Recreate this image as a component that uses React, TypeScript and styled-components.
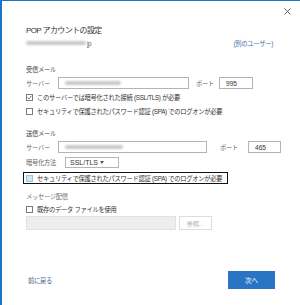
import React from 'react';
import styled, { createGlobalStyle } from 'styled-components';

const GlobalStyle = createGlobalStyle`
	html, body {
		margin: 0;
		padding: 0;
		background: #ffffff;
	}
	body {
		font-family: "Liberation Sans", "Noto Sans CJK JP", sans-serif;
		color: #333333;
	}
`;

const Dialog = styled.div`
	position: relative;
	box-sizing: border-box;
	width: 300px;
	height: 305px;
	background: #ffffff;
	border-left: 2px solid #1b74c9;
	border-top: 1px solid #1b74c9;
	display: flex;
	flex-direction: column;
	padding: 0 25px 16px 24px;
	letter-spacing: -0.3px;
`;

const Close = styled.button`
	position: absolute;
	top: 4px;
	right: 7px;
	width: 12px;
	height: 12px;
	padding: 0;
	border: 0;
	background: none;
	display: flex;
	align-items: center;
	justify-content: center;
`;

const Title = styled.div`
	margin-top: 24px;
	height: 12px;
	line-height: 12px;
	font-size: 8px;
	letter-spacing: -0.6px;
	color: #333333;
	white-space: nowrap;
`;

const AccountRow = styled.div`
	margin-top: 1px;
	height: 10px;
	display: flex;
	align-items: center;
	justify-content: space-between;
	padding-right: 2px;
	font-size: 6.3px;
`;

const Blur = styled.span<{ $w: number }>`
	display: inline-block;
	width: ${p => p.$w}px;
	height: 4px;
	border-radius: 2px;
	background: #c8c8c8;
	filter: blur(1.2px);
	vertical-align: middle;
`;

const Account = styled.span`
	color: #666666;
	display: flex;
	align-items: center;
	gap: 1px;
`;

const Link = styled.span`
	color: #3c6fae;
	white-space: nowrap;
`;

const Heading = styled.div<{ $gap: number; $muted?: boolean }>`
	margin-top: ${p => p.$gap}px;
	height: 10px;
	line-height: 10px;
	font-size: 6.3px;
	color: ${p => (p.$muted ? '#707070' : '#444444')};
	white-space: nowrap;
`;

const ServerRow = styled.div<{ $gap: number }>`
	margin-top: ${p => p.$gap}px;
	height: 12px;
	display: flex;
	align-items: center;
	font-size: 6.3px;
`;

const Label = styled.span<{ $w?: number }>`
	color: #666666;
	white-space: nowrap;
	width: ${p => (p.$w ? `${p.$w}px` : 'auto')};
	flex-shrink: 0;
`;

const TextBox = styled.div<{ $w: number; $ml?: number }>`
	box-sizing: border-box;
	width: ${p => p.$w}px;
	height: 12px;
	margin-left: ${p => p.$ml ?? 0}px;
	border: 1px solid #b4b4b4;
	background: #ffffff;
	display: flex;
	align-items: center;
	padding-left: 6px;
	font-size: 6.6px;
	letter-spacing: 0;
	color: #333333;
	flex-shrink: 0;
`;

const CheckRow = styled.div<{ $gap: number; $focus?: boolean }>`
	margin-top: ${p => p.$gap}px;
	height: 10px;
	display: flex;
	align-items: center;
	gap: 4px;
	font-size: 6.3px;
	color: #333333;
	white-space: nowrap;
	box-sizing: border-box;
	${p =>
		p.$focus
			? `margin-left: -2px; width: 203px; padding-left: 2px; outline: 1px solid #111111;`
			: ''}
`;

const Box = styled.span<{ $focus?: boolean }>`
	box-sizing: border-box;
	width: 7px;
	height: 7px;
	border: 1px solid ${p => (p.$focus ? '#9cc4e4' : '#7a7a7a')};
	background: ${p => (p.$focus ? '#cfe6f7' : '#ffffff')};
	display: flex;
	align-items: center;
	justify-content: center;
	flex-shrink: 0;
`;

const SelectRow = styled.div`
	margin-top: 4px;
	height: 11px;
	display: flex;
	align-items: center;
	gap: 9px;
	font-size: 6.3px;
`;

const Select = styled.div`
	box-sizing: border-box;
	width: 54px;
	height: 11px;
	border: 1px solid #b4b4b4;
	display: flex;
	align-items: center;
	justify-content: space-between;
	padding: 0 14px 0 4px;
	font-size: 7px;
	letter-spacing: 0;
	color: #333333;
`;

const Caret = styled.span`
	width: 0;
	height: 0;
	border-left: 2px solid transparent;
	border-right: 2px solid transparent;
	border-top: 3px solid #555555;
`;

const FileRow = styled.div`
	margin-top: 2px;
	height: 14px;
	display: flex;
	align-items: center;
	gap: 3px;
`;

const FileBox = styled.div`
	box-sizing: border-box;
	width: 150px;
	height: 14px;
	background: #eeeeee;
	border: 1px solid #e2e2e2;
`;

const Browse = styled.button`
	box-sizing: border-box;
	width: 33px;
	height: 14px;
	padding: 0;
	border: 1px solid #dddddd;
	background: #ffffff;
	color: #b0b0b0;
	font-family: inherit;
	font-size: 6.2px;
`;

const Footer = styled.div`
	margin-top: auto;
	display: flex;
	align-items: center;
	justify-content: space-between;
	padding-left: 2px;
`;

const Back = styled.span`
	font-size: 6.3px;
	color: #44618a;
`;

const Next = styled.button`
	width: 47px;
	height: 18px;
	padding: 0;
	border: 0;
	background: #2a74c6;
	color: #ffffff;
	font-family: inherit;
	font-size: 6.6px;
`;

const Check = () => (
	<svg width="5" height="5" viewBox="0 0 5 5">
		<path d="M0.6 2.6 L1.9 3.9 L4.4 0.9" fill="none" stroke="#444" strokeWidth="0.8" />
	</svg>
);

export default function App() {
	return (
		<>
			<GlobalStyle />
			<Dialog>
				<Close aria-label="閉じる">
					<svg width="7" height="7" viewBox="0 0 7 7">
						<path d="M0.5 0.5 L6.5 6.5 M6.5 0.5 L0.5 6.5" stroke="#555" strokeWidth="0.9" />
					</svg>
				</Close>
				<Title>POP アカウントの設定</Title>
				<AccountRow>
					<Account>
						<Blur $w={60} />
						jp
					</Account>
					<Link>(別のユーザー)</Link>
				</AccountRow>

				<Heading $gap={17}>受信メール</Heading>
				<ServerRow $gap={2}>
					<Label $w={32}>サーバー</Label>
					<TextBox $w={131}>
						<Blur $w={56} />
					</TextBox>
					<Label style={{ marginLeft: 7 }}>ポート</Label>
					<TextBox $w={34} $ml={5}>995</TextBox>
				</ServerRow>
				<CheckRow $gap={3}>
					<Box>
						<Check />
					</Box>
					このサーバーでは暗号化された接続 (SSL/TLS) が必要
				</CheckRow>
				<CheckRow $gap={4}>
					<Box />
					セキュリティで保護されたパスワード認証 (SPA) でのログオンが必要
				</CheckRow>

				<Heading $gap={13}>送信メール</Heading>
				<ServerRow $gap={2}>
					<Label $w={32}>サーバー</Label>
					<TextBox $w={149}>
						<Blur $w={58} />
					</TextBox>
					<Label style={{ marginLeft: 13 }}>ポート</Label>
					<TextBox $w={33} $ml={10}>465</TextBox>
				</ServerRow>
				<SelectRow>
					<Label>暗号化方法</Label>
					<Select>
						SSL/TLS
						<Caret />
					</Select>
				</SelectRow>
				<CheckRow $gap={5} $focus>
					<Box $focus />
					セキュリティで保護されたパスワード認証 (SPA) でのログオンが必要
				</CheckRow>

				<Heading $gap={9} $muted>メッセージ配信</Heading>
				<CheckRow $gap={2}>
					<Box />
					既存のデータ ファイルを使用
				</CheckRow>
				<FileRow>
					<FileBox />
					<Browse disabled>参照...</Browse>
				</FileRow>

				<Footer>
					<Back>前に戻る</Back>
					<Next>次へ</Next>
				</Footer>
			</Dialog>
		</>
	);
}
